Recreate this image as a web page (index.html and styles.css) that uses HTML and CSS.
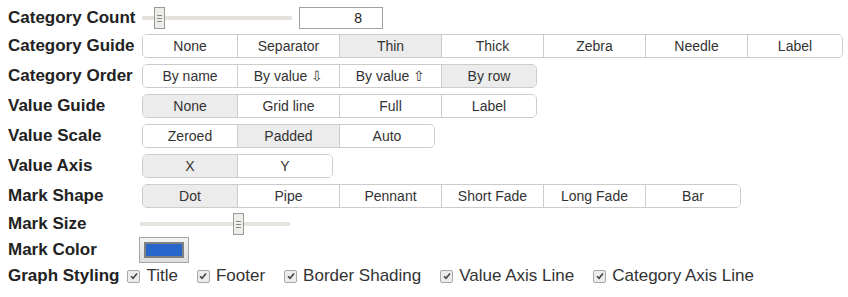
FILE: index.html
```html
<!DOCTYPE html>
<html lang="en">
  <head>
    <meta charset="UTF-8" />
    <meta name="viewport" content="width=device-width, initial-scale=1.0" />
    <title>Graph Options</title>
    <link rel="stylesheet" href="styles.css">
  </head>
  <body>
    <div class="options">
      <div class="row row-count">
        <label class="name">Category Count</label>
        <input type="range" class="slider" min="1" max="82" value="8" />
        <input type="text" class="count" value="8" />
      </div>
      <div class="row">
        <label class="name">Category Guide</label>
        <div class="group">
          <button>None</button>
          <button>Separator</button>
          <button class="on">Thin</button>
          <button>Thick</button>
          <button>Zebra</button>
          <button>Needle</button>
          <button>Label</button>
        </div>
      </div>
      <div class="row">
        <label class="name">Category Order</label>
        <div class="group">
          <button>By name</button>
          <button>By value &#8681;</button>
          <button>By value &#8679;</button>
          <button class="on">By row</button>
        </div>
      </div>
      <div class="row">
        <label class="name">Value Guide</label>
        <div class="group">
          <button class="on">None</button>
          <button>Grid line</button>
          <button>Full</button>
          <button>Label</button>
        </div>
      </div>
      <div class="row">
        <label class="name">Value Scale</label>
        <div class="group">
          <button>Zeroed</button>
          <button class="on">Padded</button>
          <button>Auto</button>
        </div>
      </div>
      <div class="row">
        <label class="name">Value Axis</label>
        <div class="group">
          <button class="on">X</button>
          <button>Y</button>
        </div>
      </div>
      <div class="row">
        <label class="name">Mark Shape</label>
        <div class="group">
          <button class="on">Dot</button>
          <button>Pipe</button>
          <button>Pennant</button>
          <button>Short Fade</button>
          <button>Long Fade</button>
          <button>Bar</button>
        </div>
      </div>
      <div class="row row-size">
        <label class="name">Mark Size</label>
        <input type="range" class="slider" min="0" max="100" value="67" />
      </div>
      <div class="row row-color">
        <label class="name">Mark Color</label>
        <button class="swatch"><span class="swatch-fill"></span></button>
      </div>
      <div class="row row-styling">
        <span class="name">Graph Styling</span>
        <label class="check"><span class="box"><svg viewBox="0 0 8 8" width="8" height="8"><path d="M1 4.2 L3 6.2 L7 1.5" fill="none" stroke="#444" stroke-width="1.6" /></svg></span>Title</label>
        <label class="check"><span class="box"><svg viewBox="0 0 8 8" width="8" height="8"><path d="M1 4.2 L3 6.2 L7 1.5" fill="none" stroke="#444" stroke-width="1.6" /></svg></span>Footer</label>
        <label class="check"><span class="box"><svg viewBox="0 0 8 8" width="8" height="8"><path d="M1 4.2 L3 6.2 L7 1.5" fill="none" stroke="#444" stroke-width="1.6" /></svg></span>Border Shading</label>
        <label class="check"><span class="box"><svg viewBox="0 0 8 8" width="8" height="8"><path d="M1 4.2 L3 6.2 L7 1.5" fill="none" stroke="#444" stroke-width="1.6" /></svg></span>Value Axis Line</label>
        <label class="check"><span class="box"><svg viewBox="0 0 8 8" width="8" height="8"><path d="M1 4.2 L3 6.2 L7 1.5" fill="none" stroke="#444" stroke-width="1.6" /></svg></span>Category Axis Line</label>
      </div>
    </div>
  </body>
</html>
```

FILE: styles.css
```css
body {
  margin: 0;
  background: #fff;
  font-family: "Liberation Sans", Arial, sans-serif;
  color: #222;
}

.options {
  padding: 4px 0 0 8px;
}

.row {
  display: flex;
  align-items: center;
  height: 30px;
}

.row-count {
  height: 27px;
  align-items: flex-start;
  padding-top: 3px;
  box-sizing: border-box;
}

.row-count .name {
  line-height: 22px;
}

.row-size,
.row-color,
.row-styling {
  height: 26px;
}

.name {
  width: 134px;
  flex: none;
  font-size: 17px;
  font-weight: bold;
  color: #222;
}

.group {
  display: flex;
  border: 1px solid #ccc;
  border-radius: 5px;
  overflow: hidden;
  height: 24px;
  box-sizing: border-box;
}

.group button {
  width: 102px;
  border: none;
  border-left: 1px solid #ccc;
  background: #fff;
  color: #333;
  font-family: "Liberation Sans", Arial, sans-serif;
  font-size: 14px;
  padding: 0;
  margin: 0;
}

.group button:first-child {
  width: 94px;
  border-left: none;
}

.group button:last-child {
  width: 95px;
}

.group button.on {
  background: #ececec;
}

.slider {
  -webkit-appearance: none;
  appearance: none;
  width: 150px;
  height: 22px;
  margin: 0;
  background: transparent;
}

.slider::-webkit-slider-runnable-track {
  height: 4px;
  background: #e5e1dc;
}

.slider::-webkit-slider-thumb {
  -webkit-appearance: none;
  width: 11px;
  height: 22px;
  margin-top: -9px;
  box-sizing: border-box;
  border: 1px solid #999;
  background:
    linear-gradient(#888, #888) 2px 7px / 5px 1px no-repeat,
    linear-gradient(#888, #888) 2px 10px / 5px 1px no-repeat,
    linear-gradient(#888, #888) 2px 13px / 5px 1px no-repeat,
    #efedea;
}

.count {
  margin-left: 7px;
  width: 84px;
  height: 22px;
  box-sizing: border-box;
  border: 1px solid #a0a0a0;
  padding: 0 20px 0 0;
  text-align: right;
  font-family: "Liberation Sans", Arial, sans-serif;
  font-size: 14px;
  color: #222;
}

.row-size .slider {
  margin-left: -2px;
}

.swatch {
  margin-left: -3px;
  width: 50px;
  height: 26px;
  padding: 0;
  border: 1px solid #a6a6a6;
  background: linear-gradient(#f3f3f3, #dedede);
  display: flex;
  align-items: center;
  justify-content: center;
}

.swatch-fill {
  width: 40px;
  height: 16px;
  box-sizing: border-box;
  border: 2px solid #808080;
  background: #2866cc;
}

.row-styling .name {
  width: auto;
  margin-right: 8px;
}

.check {
  display: flex;
  align-items: center;
  font-size: 17px;
  color: #333;
  margin-right: 19px;
}

.box {
  width: 11px;
  height: 11px;
  margin-right: 6px;
  border: 1px solid #a8a8a8;
  border-radius: 2px;
  background: #ececec;
  display: flex;
  align-items: center;
  justify-content: center;
}
```
